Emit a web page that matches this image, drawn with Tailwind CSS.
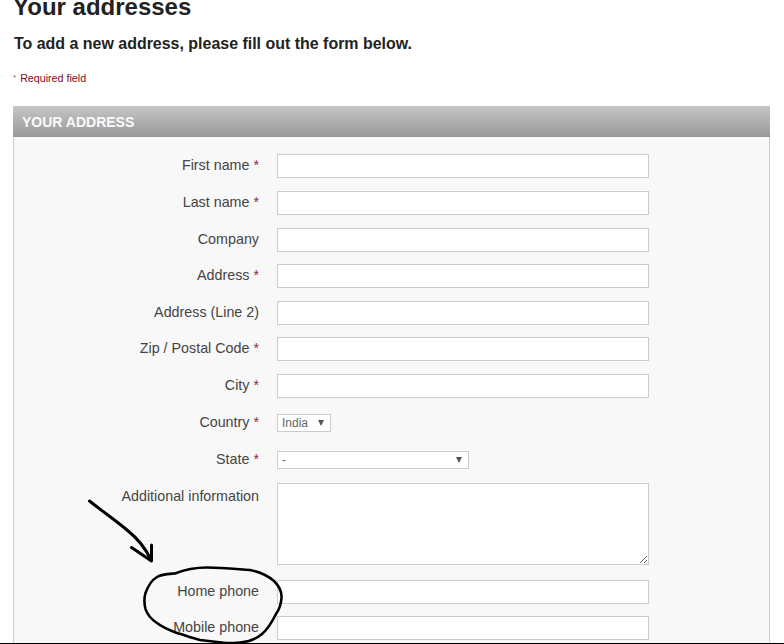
<!DOCTYPE html>
<html lang="en">
<head>
    <meta charset="UTF-8">
    <title>Your addresses</title>
    <script src="https://cdn.jsdelivr.net/npm/@tailwindcss/browser@4"></script>
</head>
<body class="bg-white">
    <div class="relative h-[644px] w-[784px] overflow-hidden font-['Liberation_Sans',Arial,sans-serif]">
        <div class="pl-[13px] w-[770px]">
            <h1 class="mt-[-7px] h-[28px] text-[24px] leading-[28px] font-bold text-[#222]">Your addresses</h1>
            <h2 class="mt-[13px] h-[20px] pl-px text-[15.96px] leading-[20px] font-bold text-[#222]">To add a new address, please fill out the form below.</h2>
            <p class="mt-[18px] flex h-[13px] gap-[4px] text-[10.7px] leading-[13px] text-[#7d0a1c]"><span class="text-[8px] leading-[11px] text-[#a05060]">*</span> <span>Required field</span></p>

            <div class="mt-[21px] border-x border-[#ccc] bg-[#f8f8f8]">
                <div class="-mx-px h-[31px] bg-gradient-to-b from-[#c6c6c6] to-[#999] pl-[9px] text-[14px] leading-[32px] font-bold text-[#fafafa]">YOUR ADDRESS</div>

                <!-- form rows -->
                <form class="pt-[17px] pl-[13px] text-[14.3px] text-[#444]">
                    <div class="flex h-[24px]">
                        <label class="w-[232px] text-right leading-[22px]">First name <span class="text-[#8a3040]">*</span></label>
                        <input type="text" class="ml-[18px] h-[24px] w-[372px] border border-[#ccc] bg-white">
                    </div>
                    <div class="mt-[13px] flex h-[24px]">
                        <label class="w-[232px] text-right leading-[22px]">Last name <span class="text-[#8a3040]">*</span></label>
                        <input type="text" class="ml-[18px] h-[24px] w-[372px] border border-[#ccc] bg-white">
                    </div>
                    <div class="mt-[13px] flex h-[24px]">
                        <label class="w-[232px] text-right leading-[22px]">Company</label>
                        <input type="text" class="ml-[18px] h-[24px] w-[372px] border border-[#ccc] bg-white">
                    </div>
                    <div class="mt-[12px] flex h-[24px]">
                        <label class="w-[232px] text-right leading-[22px]">Address <span class="text-[#8a3040]">*</span></label>
                        <input type="text" class="ml-[18px] h-[24px] w-[372px] border border-[#ccc] bg-white">
                    </div>
                    <div class="mt-[13px] flex h-[24px]">
                        <label class="w-[232px] text-right leading-[22px]">Address (Line 2)</label>
                        <input type="text" class="ml-[18px] h-[24px] w-[372px] border border-[#ccc] bg-white">
                    </div>
                    <div class="mt-[12px] flex h-[24px]">
                        <label class="w-[232px] text-right leading-[22px]">Zip / Postal Code <span class="text-[#8a3040]">*</span></label>
                        <input type="text" class="ml-[18px] h-[24px] w-[372px] border border-[#ccc] bg-white">
                    </div>
                    <div class="mt-[13px] flex h-[24px]">
                        <label class="w-[232px] text-right leading-[22px]">City <span class="text-[#8a3040]">*</span></label>
                        <input type="text" class="ml-[18px] h-[24px] w-[372px] border border-[#ccc] bg-white">
                    </div>
                    <div class="mt-[13px] flex h-[24px]">
                        <label class="w-[232px] text-right leading-[22px]">Country <span class="text-[#8a3040]">*</span></label>
                        <div class="mt-[3px] ml-[18px] flex h-[18px] w-[54px] items-center justify-between border border-[#ccc] bg-white px-[4px] text-[12px] text-[#666]">
                            <span>India</span>
                            <span class="mr-[2px] h-0 w-0 border-x-[3px] border-t-[6px] border-x-transparent border-t-[#555]"></span>
                        </div>
                    </div>
                    <div class="mt-[13px] flex h-[24px]">
                        <label class="w-[232px] text-right leading-[22px]">State <span class="text-[#8a3040]">*</span></label>
                        <div class="mt-[3px] ml-[18px] flex h-[18px] w-[192px] items-center justify-between border border-[#ccc] bg-white px-[4px] text-[12px] text-[#666]">
                            <span>-</span>
                            <span class="mr-[2px] h-0 w-0 border-x-[3px] border-t-[6px] border-x-transparent border-t-[#555]"></span>
                        </div>
                    </div>
                    <div class="mt-[11px] flex h-[82px]">
                        <label class="w-[232px] text-right leading-[26px]">Additional information</label>
                        <textarea class="ml-[18px] h-[82px] w-[372px] border border-[#ccc] bg-white"></textarea>
                    </div>
                    <div class="mt-[15px] flex h-[24px]">
                        <label class="w-[232px] text-right leading-[22px]">Home phone</label>
                        <input type="text" class="ml-[18px] h-[24px] w-[372px] border border-[#ccc] bg-white">
                    </div>
                    <div class="mt-[12px] flex h-[24px]">
                        <label class="w-[232px] text-right leading-[22px]">Mobile phone</label>
                        <input type="text" class="ml-[18px] h-[24px] w-[372px] border border-[#ccc] bg-white">
                    </div>
                    <div class="h-[20px]"></div>
                </form>
            </div>
        </div>

        <!-- hand drawn annotation on top of the form -->
        <svg class="absolute top-0 left-0" width="784" height="644" viewBox="0 0 784 644" fill="none" stroke="#000" stroke-linecap="round" stroke-linejoin="round">
            <g stroke-width="3">
                <path d="M89.5 501 C102 511 115 520 127 530 C137 538 146 549 151 560"/>
                <path d="M131.5 547.5 L151.5 561 L151.5 545"/>
            </g>
            <path stroke-width="2.6" d="M175 573.5 C186 569 197 567.5 207 567.5 C222 567.5 236 569 250 570 C260 572 268 576 274 581 C280 587 282 592 281.5 598 C281 604 279 610 276 614 C272 622 268 629 262 634 C256 639 248 642 240 642.5 C234 643 230 643 226 643 C217 642 208 641 200 640 C192 638 184 635 177 633 C169 630 162 627 157 623 C151 619 147 614 145.5 609 C144 603 144 598 145.5 593 C148 586 152 580 157 577 C162 574 168 574 175 573.5"/>
        </svg>
        <div class="absolute inset-x-0 bottom-0 h-[1px] bg-black"></div>
    </div>
</body>
</html>
